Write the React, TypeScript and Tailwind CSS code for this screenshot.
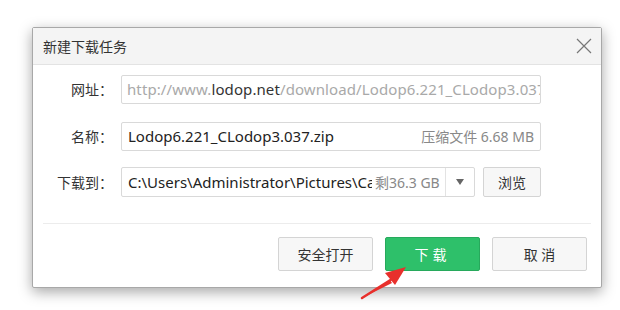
import React from 'react';

const font = { fontFamily: '"Noto Sans", "Noto Sans CJK SC", sans-serif' };

function Field({ label, children }: { label: string; children: React.ReactNode }) {
  return (
    <div className="flex items-center">
      <div className="w-[80px] text-right text-[14px] text-[#333] whitespace-nowrap">{label}</div>
      <div className="ml-[8px] flex items-center">{children}</div>
    </div>
  );
}

function Btn({ children, primary }: { children: React.ReactNode; primary?: boolean }) {
  return (
    <button
      className={
        primary
          ? 'w-[95px] h-[34px] rounded-[2px] bg-[#2ec06a] border border-[#27a95c] text-white text-[14px] tracking-[4px]'
          : 'w-[95px] h-[34px] rounded-[2px] bg-[#f7f7f7] border border-[#d4d4d4] text-[#333] text-[14px]'
      }
    >
      {children}
    </button>
  );
}

export default function App() {
  return (
    <div className="relative w-[620px] h-[310px] bg-white overflow-hidden" style={font}>
      <div className="pt-[27px] pl-[32px]">
        <div className="w-[570px] h-[261px] bg-white border border-[#a8a8a8] rounded-[2px] shadow-[0_4px_14px_rgba(0,0,0,0.35)] flex flex-col">
          <div className="h-[37px] bg-[#f4f4f4] border-b border-[#e3e3e3] flex items-center justify-between pl-[10px] pr-[9px]">
            <span className="text-[14px] text-[#333]">新建下载任务</span>
            <svg width="16" height="16" viewBox="0 0 16 16">
              <path d="M1 1 L15 15 M15 1 L1 15" stroke="#777" strokeWidth="1.2" fill="none" />
            </svg>
          </div>

          <div className="flex flex-col pt-[10px]">
            <Field label="网址：">
              <div className="w-[420px] h-[29px] border border-[#d9d9d9] rounded-[2px] pl-[5px] flex items-center overflow-hidden whitespace-nowrap text-[15px] text-[#a9a9a9] tracking-[0.1px]">
                http://www.<span className="text-[#333]">lodop.net</span>/download/Lodop6.221_CLodop3.037.zip
              </div>
            </Field>
            <div className="mt-[18px]">
              <Field label="名称：">
                <div className="w-[420px] h-[29px] border border-[#d9d9d9] rounded-[2px] px-[6px] flex items-center justify-between whitespace-nowrap">
                  <span className="text-[15px] text-[#222]">Lodop6.221_CLodop3.037.zip</span>
                  <span className="text-[14px] text-[#888]">压缩文件 6.68 MB</span>
                </div>
              </Field>
            </div>
            <div className="mt-[16px]">
              <Field label="下载到：">
                <div className="w-[354px] h-[30px] border border-[#d9d9d9] rounded-[2px] flex items-center whitespace-nowrap">
                  <div className="w-[250px] overflow-hidden pl-[6px] text-[15px] text-[#222]">
                    C:\Users\Administrator\Pictures\Camera Roll
                  </div>
                  <span className="flex-1 text-[14px] text-[#888] pl-[3px]">剩36.3 GB</span>
                  <div className="w-[29px] h-full border-l border-[#e3e3e3] flex items-center justify-center">
                    <svg width="8" height="6" viewBox="0 0 8 6">
                      <path d="M0 0 L8 0 L4 6 Z" fill="#666" />
                    </svg>
                  </div>
                </div>
                <button className="ml-[8px] w-[58px] h-[30px] border border-[#d4d4d4] rounded-[2px] bg-[#f7f7f7] text-[14px] text-[#333]">
                  浏览
                </button>
              </Field>
            </div>
          </div>

          <div className="mx-[10px] mt-[26px] border-t border-[#ececec]" />

          <div className="flex justify-end gap-[12px] pr-[14px] pt-[13px]">
            <Btn>安全打开</Btn>
            <Btn primary>下载</Btn>
            <Btn>取 消</Btn>
          </div>
        </div>
      </div>

      <svg className="absolute left-0 top-0" width="620" height="310" viewBox="0 0 620 310">
        <path d="M362 298 L390 280 L392 283 Z" fill="#e8302c" />
        <path d="M362 298 L392 279" stroke="#e8302c" strokeWidth="2.5" strokeLinecap="round" />
        <path d="M406 267 L385 273 L395 285 Z" fill="#e8302c" />
      </svg>
    </div>
  );
}
